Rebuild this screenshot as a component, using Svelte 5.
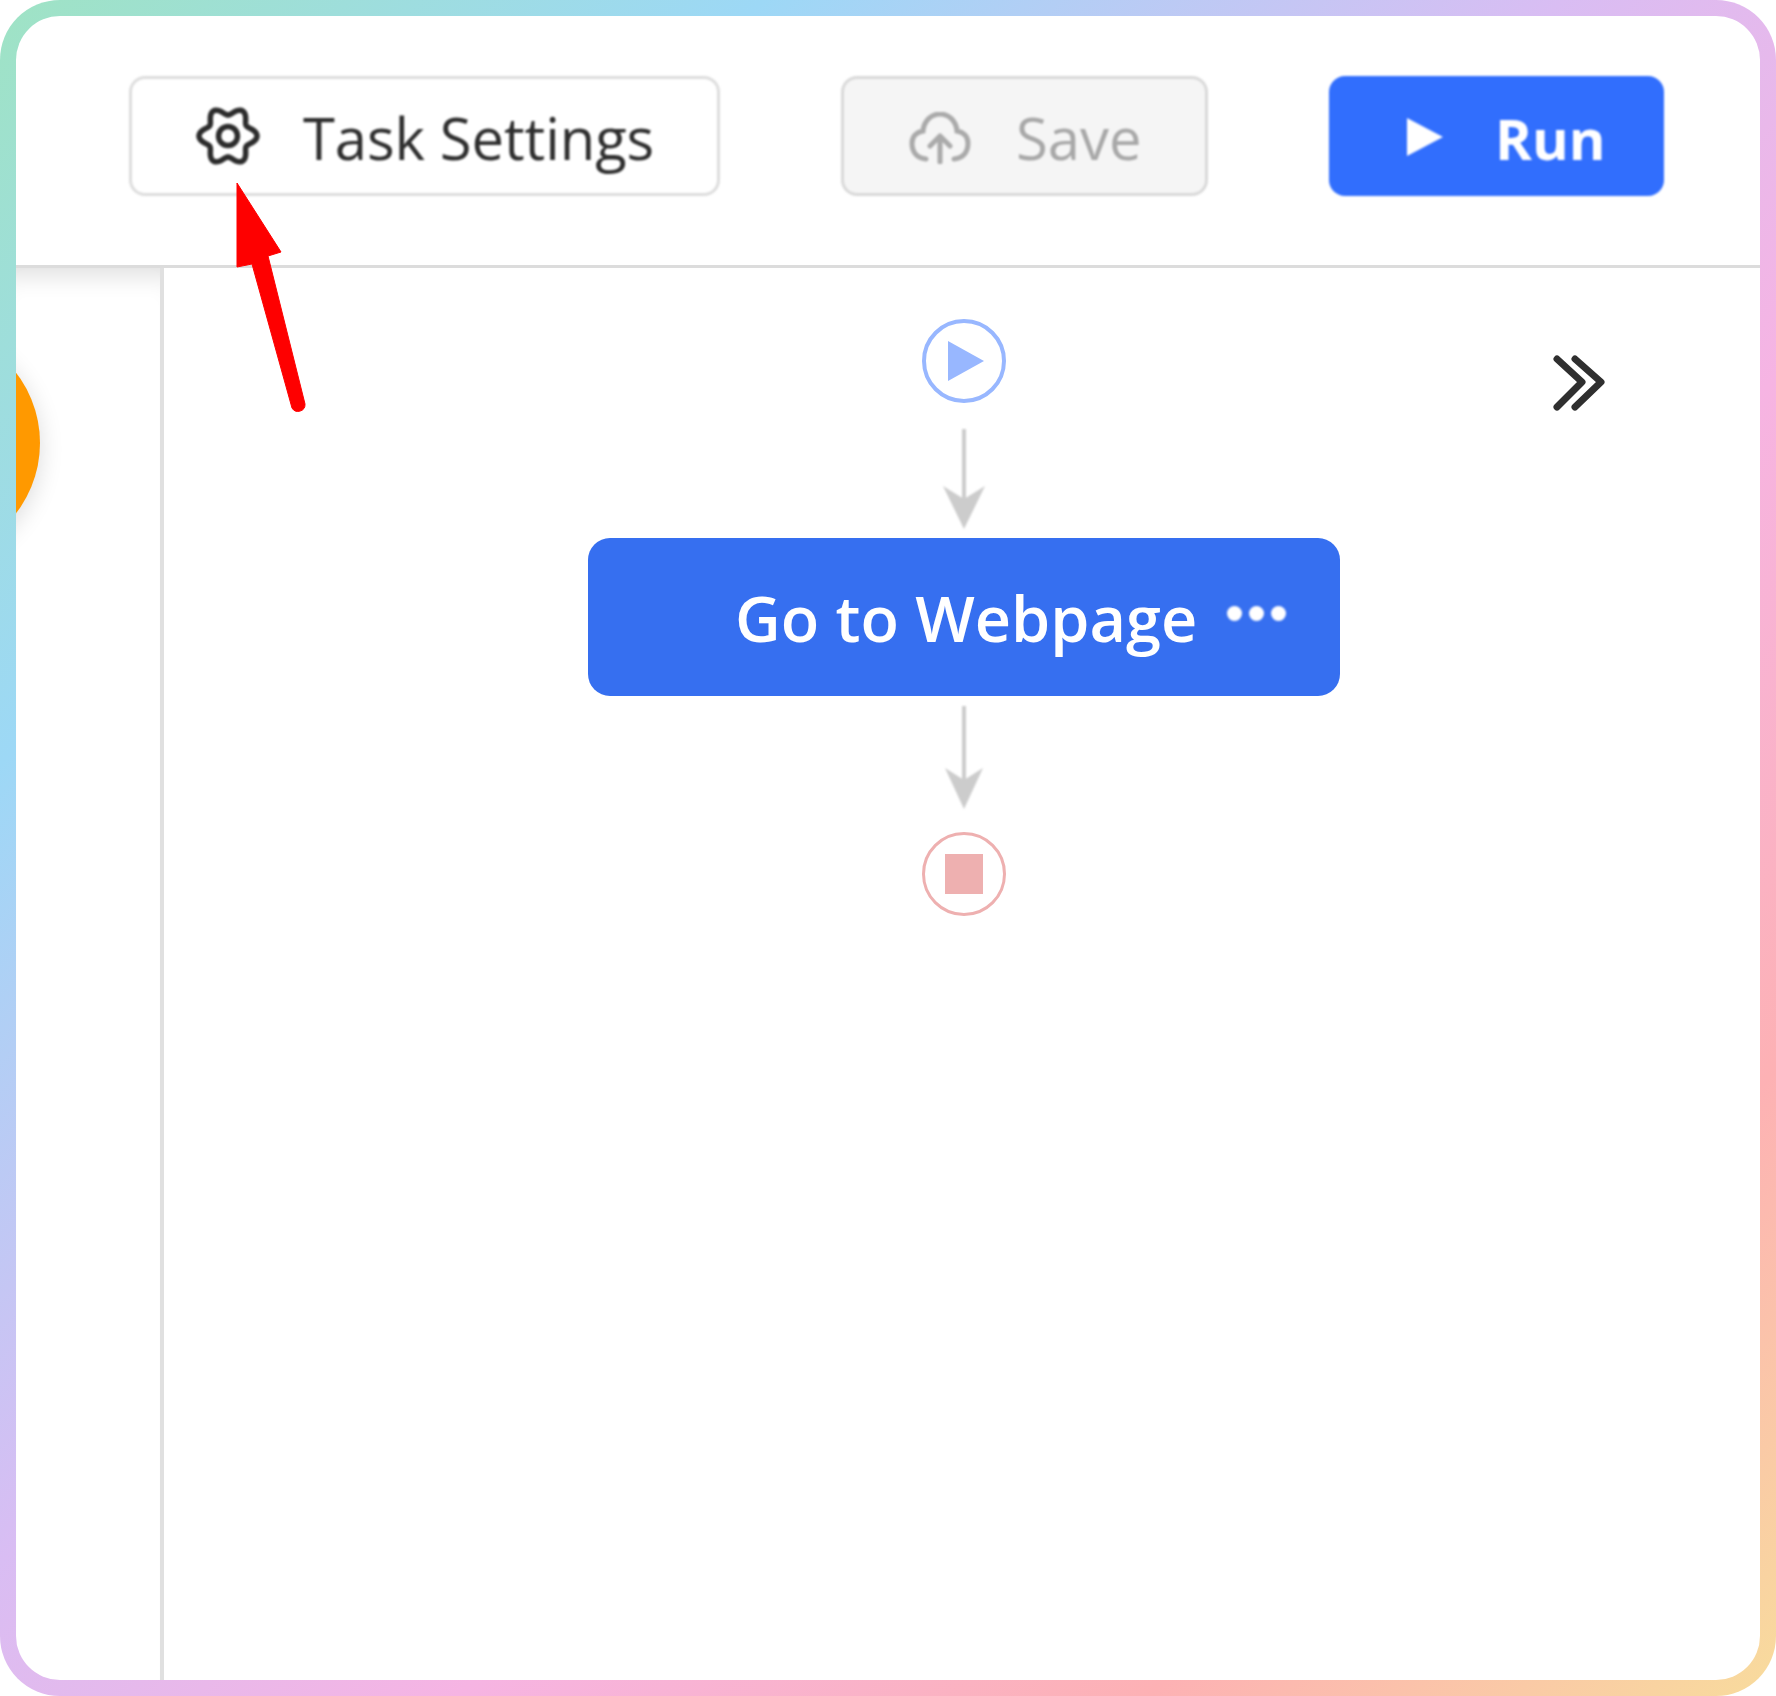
<script>
    // gear outline: six soft lobes round the centre
    function gearPath(cx, cy, r, wave) {
        let d = '';
        for (let i = 0; i <= 180; i++) {
            const t = (i / 180) * Math.PI * 2;
            const rad = r + wave * Math.cos(6 * t);
            const x = cx + rad * Math.cos(t);
            const y = cy + rad * Math.sin(t);
            d += (i === 0 ? 'M' : 'L') + x.toFixed(2) + ' ' + y.toFixed(2);
        }
        return d + 'Z';
    }

    const gear = gearPath(32, 30, 25, 4);
</script>

<div class="frame">
    <div class="inner">
        <header class="toolbar">
            <button class="btn settings">
                <svg class="gear" viewBox="0 0 64 60" width="64" height="60">
                    <path d={gear} fill="none" stroke="#2c2c2c" stroke-width="5.5" />
                    <circle cx="32" cy="30" r="9.5" fill="none" stroke="#2c2c2c" stroke-width="5.5" />
                </svg>
                <span>Task Settings</span>
            </button>
            <button class="btn save">
                <svg class="cloud" viewBox="0 0 62 52" width="62" height="52">
                    <path d="M17 47C7 46 3 39 3 31C3 24 8 20 14 19C15 8 23 2 31 2C39 2 47 8 48 19C54 20 59 24 59 31C59 39 55 46 45 47" fill="none" stroke="#aaa" stroke-width="5" stroke-linecap="round" />
                    <path d="M31 50V25M21 34L31 24L41 34" fill="none" stroke="#aaa" stroke-width="5" stroke-linecap="round" stroke-linejoin="round" />
                </svg>
                <span>Save</span>
            </button>
            <button class="btn run">
                <svg class="play" viewBox="0 0 36 38" width="36" height="38">
                    <polygon points="0,0 36,19 0,38" fill="#fff" />
                </svg>
                <span>Run</span>
            </button>
        </header>

        <div class="body">
            <aside class="sidebar">
                <div class="fab"></div>
            </aside>
            <main class="canvas">
                <div class="flow">
                    <div class="endpoint start">
                        <svg viewBox="0 0 36 40" width="36" height="40">
                            <polygon points="0,0 36,20 0,40" fill="#98b7ff" />
                        </svg>
                    </div>
                    <svg class="link first" viewBox="0 0 44 100" width="44" height="100">
                        <line x1="22" y1="0" x2="22" y2="70" stroke="#ccc" stroke-width="4" />
                        <polygon points="1,57 22,70 43,57 22,100" fill="#ccc" />
                    </svg>
                    <div class="node">
                        <span class="label">Go to Webpage</span>
                        <span class="dots"><i></i><i></i><i></i></span>
                    </div>
                    <svg class="link second" viewBox="0 0 40 103" width="40" height="103">
                        <line x1="20" y1="0" x2="20" y2="74" stroke="#ccc" stroke-width="4" />
                        <polygon points="1,62 20,74 39,62 20,103" fill="#ccc" />
                    </svg>
                    <div class="endpoint stop">
                        <span class="square"></span>
                    </div>
                </div>
                <svg class="collapse" viewBox="0 0 56 56" width="56" height="56">
                    <path d="M5 4L30 27L5 52M23 4L49 27L23 52" fill="none" stroke="#2f2f2f" stroke-width="7" stroke-linecap="round" stroke-linejoin="round" />
                </svg>
            </main>
        </div>

        <svg class="pointer" viewBox="0 0 80 240" width="80" height="240">
            <path d="M7 3L51 72L38 76L75 224A7 7 0 0 1 62 228L22 84L7 87Z" fill="#fe0000" stroke="#fe0000" stroke-width="1" stroke-linejoin="round" />
        </svg>
    </div>
</div>

<style>
    :global(body) {
        margin: 0;
        background: #fff;
    }
    .frame {
        position: relative;
        box-sizing: border-box;
        width: 1776px;
        height: 1696px;
        padding: 16px;
        border-radius: 60px;
        background: linear-gradient(135deg, #9fe3c4 0%, #9dd8f6 22%, #d9bdf3 45%, #f6b4e3 62%, #fdb1b4 82%, #f8dc9c 100%);
    }
    .inner {
        position: relative;
        display: flex;
        flex-direction: column;
        height: 100%;
        border-radius: 44px;
        background: #fff;
        overflow: hidden;
        font-family: "Open Sans", "Noto Sans", sans-serif;
    }
    .toolbar {
        box-sizing: border-box;
        display: flex;
        align-items: flex-start;
        gap: 121px;
        height: 252px;
        padding: 60px 0 0 113px;
        border-bottom: 3px solid #dcdcdc;
        flex-shrink: 0;
    }
    .btn {
        box-sizing: border-box;
        display: flex;
        align-items: center;
        height: 120px;
        margin: 0;
        border-radius: 16px;
        font-family: inherit;
        font-size: 58px;
        line-height: 1;
        filter: blur(0.8px);
    }
    .btn span {
        margin-top: 3px;
    }
    .settings {
        width: 591px;
        padding: 0 0 0 64px;
        gap: 43px;
        border: 3px solid #ddd;
        background: #fff;
        color: #2e2e2e;
        font-weight: 500;
        letter-spacing: -0.1px;
    }
    .save {
        width: 367px;
        padding: 0 0 0 65px;
        gap: 45px;
        border: 3px solid #d9d9d9;
        background: #f5f5f5;
        color: #a8a8a8;
        font-weight: 500;
    }
    .cloud {
        margin-top: 4px;
    }
    .run {
        width: 335px;
        padding: 0 0 0 78px;
        gap: 52px;
        border: none;
        background: #316efd;
        color: #fff;
        font-weight: 700;
        font-size: 56px;
    }
    .play {
        margin-top: 2px;
    }
    .body {
        display: flex;
        flex: 1;
        min-height: 0;
    }
    .sidebar {
        position: relative;
        box-sizing: border-box;
        width: 148px;
        flex-shrink: 0;
        border-right: 4px solid #e0e0e0;
        box-shadow: inset 0 28px 26px -22px rgba(0, 0, 0, 0.14);
        overflow: hidden;
    }
    .fab {
        position: absolute;
        left: -206px;
        top: 60px;
        width: 230px;
        height: 230px;
        border-radius: 50%;
        background: #ff9900;
        box-shadow: 0 6px 24px rgba(0, 0, 0, 0.14);
    }
    .canvas {
        position: relative;
        flex: 1;
    }
    .flow {
        display: flex;
        flex-direction: column;
        align-items: center;
        width: 752px;
        margin: 51px 0 0 424px;
    }
    .endpoint {
        box-sizing: border-box;
        display: flex;
        align-items: center;
        justify-content: center;
        width: 84px;
        height: 84px;
        border-radius: 50%;
        background: #fff;
        filter: blur(0.7px);
    }
    .start {
        border: 4px solid #98b7ff;
        padding-left: 3px;
    }
    .stop {
        border: 3px solid #eeb0b0;
    }
    .square {
        width: 38px;
        height: 40px;
        background: #eeb0b0;
    }
    .link {
        display: block;
        filter: blur(0.9px);
    }
    .first {
        margin: 26px 0 9px;
    }
    .second {
        margin: 10px 0 23px;
    }
    .node {
        box-sizing: border-box;
        display: flex;
        align-items: center;
        width: 752px;
        height: 158px;
        padding-left: 147px;
        border-radius: 22px;
        background: #366ff0;
        color: #fff;
    }
    .label {
        font-size: 63px;
        line-height: 1;
        font-weight: 600;
        filter: blur(0.7px);
    }
    .dots {
        display: flex;
        gap: 7px;
        margin: -8px 0 0 30px;
        filter: blur(0.8px);
    }
    .dots i {
        display: block;
        width: 15px;
        height: 15px;
        border-radius: 50%;
        background: #fff;
    }
    .collapse {
        position: absolute;
        left: 1388px;
        top: 87px;
        filter: blur(0.5px);
    }
    .pointer {
        position: absolute;
        left: 214px;
        top: 164px;
        filter: blur(0.5px);
    }
</style>
